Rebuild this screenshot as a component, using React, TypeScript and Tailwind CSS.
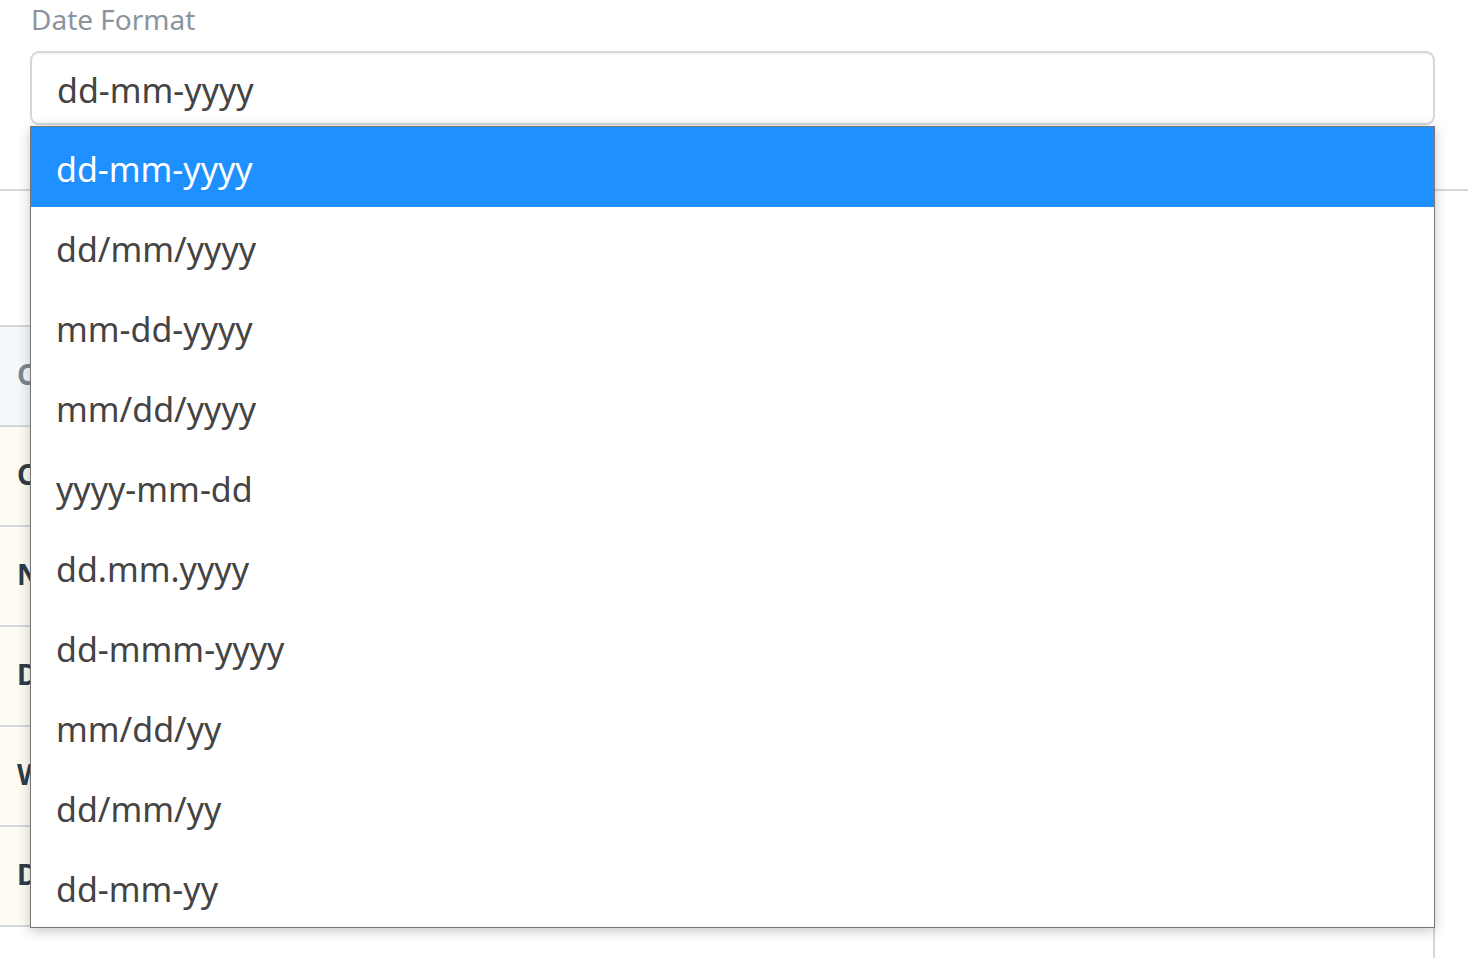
import React from 'react';

const formats = [
  'dd-mm-yyyy',
  'dd/mm/yyyy',
  'mm-dd-yyyy',
  'mm/dd/yyyy',
  'yyyy-mm-dd',
  'dd.mm.yyyy',
  'dd-mmm-yyyy',
  'mm/dd/yy',
  'dd/mm/yy',
  'dd-mm-yy',
];

const rows = ['Currency', 'Number Format', 'Date Format', 'Week Start', 'Decimal Places'];

export default function App() {
  const selected = formats[0];

  return (
    <div className="relative h-[958px] w-full overflow-hidden bg-white" style={{ fontFamily: '"Noto Sans", "Open Sans", sans-serif' }}>
      {/* form group */}
      <div className="px-[30px]">
        <label className="block h-[40px] pl-px text-[28px] leading-[38px] text-[#8a949e]">Date Format</label>
        <div className="mt-[11px] flex h-[74px] w-[1405px] items-center rounded-[9px] border-2 border-[#d3d8de] bg-white pl-[25px] pt-[5px] text-[34px] text-[#444] shadow-[inset_0_1px_2px_rgba(0,0,0,0.06),0_1px_1px_rgba(0,0,0,0.04)]">
          {selected}
        </div>
      </div>

      <div className="mt-[64px] h-[2px] w-full bg-[#d4d8dc]" />

      {/* settings table behind the list */}
      <div className="mt-[134px] w-[1435px] border-r-2 border-[#d4d8dc]">
        <div className="flex h-[102px] items-center border-y-2 border-[#d4d8dc] bg-[#f5f8fb] pb-[5px] pl-[17px] text-[28px] font-bold text-[#7b8794]">
          <span className="w-[13px] overflow-hidden whitespace-nowrap">Currency Settings</span>
        </div>
        {rows.map((r) => (
          <div key={r} className="flex h-[100px] items-center border-b-2 border-[#d4d8dc] bg-[#fdfbf2] pb-[5px] pl-[17px] text-[28px] font-bold text-[#2f3b47]">
            <span className="w-[13px] overflow-hidden whitespace-nowrap">{r}</span>
          </div>
        ))}
        <div className="h-[40px] bg-white" />
      </div>

      {/* open dropdown list */}
      <ul className="absolute left-[30px] top-[126px] w-[1405px] border border-[#767676] bg-white shadow-[0_3px_12px_rgba(0,0,0,0.22)]">
        {formats.map((f) => (
          <li
            key={f}
            className={`flex h-[80px] items-center pl-[25px] pt-[5px] text-[34px] ${f === selected ? 'bg-[#1e90ff] text-white' : 'text-[#444]'}`}
          >
            {f}
          </li>
        ))}
      </ul>
    </div>
  );
}
